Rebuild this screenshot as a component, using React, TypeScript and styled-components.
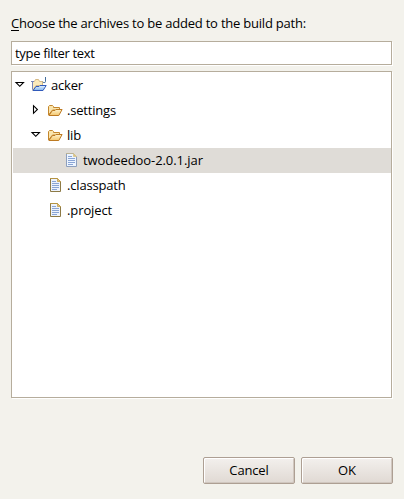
import React from "react";
import styled, { createGlobalStyle } from "styled-components";

const GlobalStyle = createGlobalStyle`
  * { box-sizing: border-box; }
  body {
    margin: 0;
    background: #f3f2ec;
    color: #000;
    font: 13px/20px "Open Sans", "Noto Sans", sans-serif;
  }
`;

const Dialog = styled.main`
  display: flex;
  flex-direction: column;
  width: 404px;
  height: 499px;
  padding: 13px 11px 15px;
`;

const Prompt = styled.label`
  height: 20px;
  margin-bottom: 8px;
  white-space: nowrap;
  letter-spacing: -0.215px;
`;

const Mnemonic = styled.span`
  text-decoration: underline;
  text-underline-offset: 2px;
  text-decoration-thickness: 1px;
  text-decoration-skip-ink: none;
`;

const Filter = styled.input`
  width: 381px;
  height: 24px;
  padding: 0 3px;
  border: 1px solid #b6ad9c;
  border-radius: 0;
  box-shadow: 1px 1px 0 #fff;
  background: #fff;
  color: inherit;
  font: inherit;
  letter-spacing: -0.32px;
  outline: none;
`;

const Tree = styled.div`
  width: 381px;
  height: 327px;
  margin-top: 6px;
  padding: 1px 0 0 1px;
  border: 1px solid #b6ad9c;
  box-shadow: 1px 1px 0 #fff;
  background: #fff;
`;

const Row = styled.div<{ $depth: number; $selected?: boolean }>`
  display: flex;
  align-items: flex-start;
  height: 25px;
  padding-top: 4px;
  padding-left: ${(p) => p.$depth * 16 + 1}px;
  background: ${(p) => (p.$selected ? "#dfdcd7" : "transparent")};
`;

const Expander = styled.span`
  display: flex;
  width: 12px;
  height: 16px;
  margin-right: 5px;
`;

const RowIcon = styled.span`
  display: flex;
  width: 16px;
  height: 16px;
  margin-right: 4px;
`;

const RowLabel = styled.span<{ $tracking: number }>`
  margin-top: -2px;
  letter-spacing: ${(p) => p.$tracking}px;
`;

const Buttons = styled.div`
  display: flex;
  justify-content: flex-end;
  gap: 6px;
  margin: auto 0 0;
`;

const Button = styled.button`
  width: 92px;
  height: 27px;
  padding: 0 0 1px;
  border: 1px solid #ad9f93;
  border-radius: 2px;
  box-shadow: inset 1px 1px 0 #fff, inset -1px -1px 0 #d0c7bf;
  background: linear-gradient(#f3f0ed, #e0d9d3);
  color: inherit;
  font: inherit;
  letter-spacing: -0.15px;
`;

const Arrow = ({ open }: { open: boolean }) => (
  <svg width="12" height="16" viewBox="0 0 12 16">
    {open ? (
      <path d="M2 5.5H9.5L5.75 9.3Z" fill="#fff" stroke="#000" strokeWidth="1.1" />
    ) : (
      <path d="M3.5 3.7V11.3L7.4 7.5Z" fill="#fff" stroke="#000" strokeWidth="1.1" />
    )}
  </svg>
);

const FolderIcon = () => (
  <svg width="16" height="16" viewBox="0 0 16 16">
    <defs>
      <linearGradient id="folderFront" x2="0" y2="1">
        <stop stopColor="#fff3cb" />
        <stop offset="1" stopColor="#f3c66d" />
      </linearGradient>
    </defs>
    <path d="M1.5 13V4.5L2.5 3.5H5.5L6.5 4.5V5.5H12.5V8H5.5Z" fill="#f9e5ae" stroke="#c4862c" />
    <path d="M1.9 13.5L5.5 8.5H8L9 7.5H15.1L11.8 13.5Z" fill="url(#folderFront)" stroke="#bd7a22" />
  </svg>
);

const ProjectIcon = () => (
  <svg width="16" height="16" viewBox="0 0 16 16">
    <defs>
      <linearGradient id="projectFront" x2="0" y2="1">
        <stop stopColor="#e6f3ff" />
        <stop offset="1" stopColor="#83b5ec" />
      </linearGradient>
    </defs>
    <path d="M1.5 12.5V4.5H3.5L4.5 2.5H7.5L8.5 4.5H11.5V8.5H5L2 13.5Z" fill="#faeabb" stroke="#d5b985" />
    <path d="M0 4.5H3M1.5 5V12.5" fill="none" stroke="#7886b8" />
    <path d="M2 13.5L5 9.5H8L9 8.5H15.2L12 13.5Z" fill="url(#projectFront)" stroke="#315abb" />
    <path d="M14.5 0V4.5Q14.5 5.6 13.2 5.6Q12 5.6 11.7 4.7" fill="none" stroke="#426d9b" />
  </svg>
);

const FileIcon = ({ archive = false }: { archive?: boolean }) => (
  <svg width="16" height="16" viewBox="0 0 16 16">
    <path
      d="M3.5 1.5H10.5L13.5 4.5V14.5H3.5Z"
      fill={archive ? "#edf5ff" : "#eef3fc"}
      stroke={archive ? "#8d9fbd" : "#8d7a46"}
    />
    <path d="M3 1.5H10.5L13.5 4.5" fill="none" stroke={archive ? "#bbb295" : "#b59444"} />
    <path d="M10.5 1.5V4.5H13.5Z" fill="#e2c67c" stroke={archive ? "#d6c38d" : "#c4a04c"} strokeWidth=".8" />
    <path d="M5 4.5H9M5 6.5H12M5 8.5H12M5 10.5H12M5 12.5H10" stroke="#8aa5d5" />
  </svg>
);

type Node = {
  name: string;
  depth: number;
  kind: "project" | "folder" | "file" | "archive";
  tracking: number;
  open?: boolean;
};

const nodes: Node[] = [
  { name: "acker", depth: 0, kind: "project", tracking: -0.2, open: true },
  { name: ".settings", depth: 1, kind: "folder", tracking: -0.2, open: false },
  { name: "lib", depth: 1, kind: "folder", tracking: -0.2, open: true },
  { name: "twodeedoo-2.0.1.jar", depth: 2, kind: "archive", tracking: -0.07 },
  { name: ".classpath", depth: 1, kind: "file", tracking: -0.17 },
  { name: ".project", depth: 1, kind: "file", tracking: -0.1 },
];

const NodeIcon = ({ kind }: { kind: Node["kind"] }) => {
  if (kind === "project") return <ProjectIcon />;
  if (kind === "folder") return <FolderIcon />;
  return <FileIcon archive={kind === "archive"} />;
};

export default function App() {
  return (
    <Dialog>
      <GlobalStyle />
      <Prompt htmlFor="filter">
        <Mnemonic>C</Mnemonic>hoose the archives to be added to the build path:
      </Prompt>
      <Filter id="filter" defaultValue="type filter text" />
      <Tree role="tree">
        {nodes.map((node) => (
          <Row key={node.name} role="treeitem" $depth={node.depth} $selected={node.kind === "archive"}>
            <Expander>{node.open !== undefined && <Arrow open={node.open} />}</Expander>
            <RowIcon>
              <NodeIcon kind={node.kind} />
            </RowIcon>
            <RowLabel $tracking={node.tracking}>{node.name}</RowLabel>
          </Row>
        ))}
      </Tree>
      <Buttons>
        <Button>Cancel</Button>
        <Button>OK</Button>
      </Buttons>
    </Dialog>
  );
}
